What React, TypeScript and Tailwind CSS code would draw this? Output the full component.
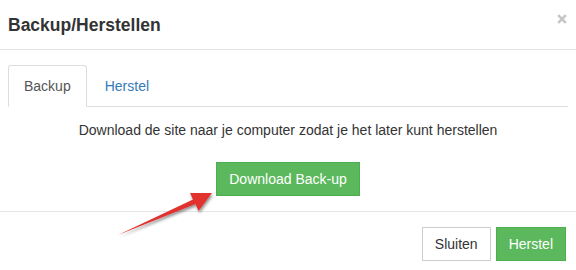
import React from "react";

export default function App() {
  return (
    <div
      className="relative w-[576px] h-[270px] overflow-hidden bg-white text-[#333] text-[14px] leading-[20px]"
      style={{ fontFamily: '"Liberation Sans", Arial, sans-serif' }}
    >
      <div className="flex items-center justify-between h-[50px] border-b border-[#e5e5e5] pl-[8px] pr-[9px]">
        <h4 className="text-[17.5px] font-bold leading-[20px] text-[#333]">Backup/Herstellen</h4>
        <svg width="10" height="10" viewBox="0 0 10 10" className="-mt-[12px]">
          <path d="M1.2 1.2 L8.8 8.8 M8.8 1.2 L1.2 8.8" stroke="#c6c6c6" strokeWidth="2.6" strokeLinecap="butt" />
        </svg>
      </div>

      <div className="px-[8px] pt-[15px] pb-[15px]">
        <div className="flex border-b border-[#ddd]">
          <div className="-mb-px px-[15px] py-[10px] border border-[#ddd] border-b-white bg-white text-[#555] rounded-t-[3px]">
            Backup
          </div>
          <div className="-mb-px ml-[2px] px-[15px] py-[10px] border border-transparent text-[#337ab7]">
            Herstel
          </div>
        </div>
        <p className="mt-[13px] text-center">
          Download de site naar je computer zodat je het later kunt herstellen
        </p>
        <div className="mt-[22px] flex justify-center">
          <button className="h-[34px] px-[12px] border border-[#4cae4c] bg-[#5cb85c] text-white text-[14px] leading-[20px]">
            Download Back-up
          </button>
        </div>
      </div>

      <div className="border-t border-[#e5e5e5] pt-[15px] pr-[10px] flex justify-end gap-[5px]">
        <button className="h-[34px] px-[12px] border border-[#ccc] bg-white text-[#333] text-[14px] leading-[20px]">
          Sluiten
        </button>
        <button className="h-[34px] px-[12px] border border-[#4cae4c] bg-[#5cb85c] text-white text-[14px] leading-[20px]">
          Herstel
        </button>
      </div>

      <svg
        className="absolute left-0 top-0 pointer-events-none"
        width="576"
        height="270"
        viewBox="0 0 576 270"
      >
        <defs>
          <filter id="sh" x="-20%" y="-20%" width="140%" height="140%">
            <feDropShadow dx="1" dy="2" stdDeviation="1.5" floodColor="#000" floodOpacity="0.45" />
          </filter>
        </defs>
        <polygon
          points="118,235 193,199.5 190,193 212,193 198.5,211 195.5,204"
          fill="#e2302e"
          filter="url(#sh)"
        />
      </svg>
    </div>
  );
}
